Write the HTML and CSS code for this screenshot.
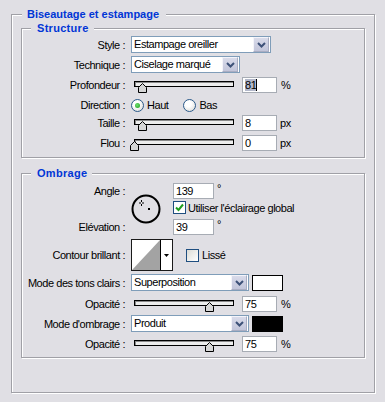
FILE: index.html
```html
<!DOCTYPE html>
<html>
<head>
<meta charset="utf-8">
<link rel="stylesheet" href="styles.css">
</head>
<body>
<fieldset class="group outer">
  <legend class="title t-outer">Biseautage et estampage</legend>

  <fieldset class="group inner structure">
    <legend class="title t-inner">Structure</legend>

    <div class="row h17">
      <span class="label">Style :</span>
      <div class="ctrl">
        <div class="select w-style">
          <span class="sel-text">Estampage oreiller</span>
          <span class="sel-btn"><svg width="9" height="6" viewBox="0 0 9 6"><polyline points="1,1 4.5,4.5 8,1" fill="none" stroke="#3d5178" stroke-width="2"/></svg></span>
        </div>
      </div>
    </div>

    <div class="row h17 mt3">
      <span class="label">Technique :</span>
      <div class="ctrl">
        <div class="select w-tech">
          <span class="sel-text">Ciselage marqué</span>
          <span class="sel-btn"><svg width="9" height="6" viewBox="0 0 9 6"><polyline points="1,1 4.5,4.5 8,1" fill="none" stroke="#3d5178" stroke-width="2"/></svg></span>
        </div>
      </div>
    </div>

    <div class="row h16 mt4">
      <span class="label">Profondeur :</span>
      <div class="ctrl">
        <div class="slider"><div class="track"></div><svg class="thumb" style="left:4px" width="9" height="10" viewBox="0 0 9 10"><polygon points="4.5,0.5 8.5,4.5 8.5,9.5 0.5,9.5 0.5,4.5" fill="#d6d6d6" stroke="#000"/></svg></div>
        <div class="field"><span class="hl">81</span></div>
        <span class="unit">%</span>
      </div>
    </div>

    <div class="row h16 mt4">
      <span class="label">Direction :</span>
      <div class="ctrl">
        <span class="radio on"></span><span class="rlabel">Haut</span>
        <span class="radio gap"></span><span class="rlabel">Bas</span>
      </div>
    </div>

    <div class="row h16 mt2">
      <span class="label">Taille :</span>
      <div class="ctrl">
        <div class="slider"><div class="track"></div><svg class="thumb" style="left:4px" width="9" height="10" viewBox="0 0 9 10"><polygon points="4.5,0.5 8.5,4.5 8.5,9.5 0.5,9.5 0.5,4.5" fill="#d6d6d6" stroke="#000"/></svg></div>
        <div class="field">8</div>
        <span class="unit px">px</span>
      </div>
    </div>

    <div class="row h16 mt4">
      <span class="label">Flou :</span>
      <div class="ctrl">
        <div class="slider"><div class="track"></div><svg class="thumb" style="left:-4px" width="9" height="10" viewBox="0 0 9 10"><polygon points="4.5,0.5 8.5,4.5 8.5,9.5 0.5,9.5 0.5,4.5" fill="#d6d6d6" stroke="#000"/></svg></div>
        <div class="field">0</div>
        <span class="unit px">px</span>
      </div>
    </div>
  </fieldset>

  <fieldset class="group inner shading">
    <legend class="title t-inner">Ombrage</legend>

    <div class="row h52">
      <div class="label stack">
        <span class="l16">Angle :</span>
        <span class="l16">Elévation :</span>
      </div>
      <div class="ctrl">
        <svg class="dial" width="30" height="30" viewBox="0 0 30 30">
          <circle cx="15" cy="15" r="13.5" fill="none" stroke="#000" stroke-width="2"/>
          <rect x="17" y="14" width="2" height="2" fill="#000"/>
          <path d="M10.5 6v2M10.5 10v2M8 9h2M11 9h2" stroke="#000" stroke-width="1"/>
        </svg>
        <div class="angle-col">
          <div class="line16"><div class="field wide">139</div><span class="deg">°</span></div>
          <div class="line13 mt2"><span class="check on"><svg width="11" height="11" viewBox="0 0 11 11"><polyline points="2,5.5 4.5,8 9,2.5" fill="none" stroke="#1f9e1f" stroke-width="2"/></svg></span><span class="clabel">Utiliser l'éclairage global</span></div>
          <div class="line16 mt5"><div class="field wide">39</div><span class="deg">°</span></div>
        </div>
      </div>
    </div>

    <div class="row h32 mt4">
      <span class="label">Contour brillant :</span>
      <div class="ctrl">
        <div class="contour">
          <div class="preview"><svg width="28" height="30" viewBox="0 0 28 30"><polygon points="0,30 28,0 28,30" fill="#a3a3a3"/></svg></div>
          <div class="cdrop"><svg width="5" height="3" viewBox="0 0 5 3"><polygon points="0,0 5,0 2.5,3" fill="#000"/></svg></div>
        </div>
        <span class="check lisse"></span><span class="clabel">Lissé</span>
      </div>
    </div>

    <div class="row h17 mt3">
      <span class="label">Mode des tons clairs :</span>
      <div class="ctrl">
        <div class="select w-mode">
          <span class="sel-text">Superposition</span>
          <span class="sel-btn"><svg width="9" height="6" viewBox="0 0 9 6"><polyline points="1,1 4.5,4.5 8,1" fill="none" stroke="#3d5178" stroke-width="2"/></svg></span>
        </div>
        <span class="swatch white"></span>
      </div>
    </div>

    <div class="row h16 mt5">
      <span class="label">Opacité :</span>
      <div class="ctrl">
        <div class="slider"><div class="track"></div><svg class="thumb" style="left:71px" width="9" height="10" viewBox="0 0 9 10"><polygon points="4.5,0.5 8.5,4.5 8.5,9.5 0.5,9.5 0.5,4.5" fill="#d6d6d6" stroke="#000"/></svg></div>
        <div class="field">75</div>
        <span class="unit">%</span>
      </div>
    </div>

    <div class="row h17 mt3">
      <span class="label">Mode d'ombrage :</span>
      <div class="ctrl">
        <div class="select w-mode">
          <span class="sel-text">Produit</span>
          <span class="sel-btn"><svg width="9" height="6" viewBox="0 0 9 6"><polyline points="1,1 4.5,4.5 8,1" fill="none" stroke="#3d5178" stroke-width="2"/></svg></span>
        </div>
        <span class="swatch black"></span>
      </div>
    </div>

    <div class="row h16 mt4">
      <span class="label">Opacité :</span>
      <div class="ctrl">
        <div class="slider"><div class="track"></div><svg class="thumb" style="left:71px" width="9" height="10" viewBox="0 0 9 10"><polygon points="4.5,0.5 8.5,4.5 8.5,9.5 0.5,9.5 0.5,4.5" fill="#d6d6d6" stroke="#000"/></svg></div>
        <div class="field">75</div>
        <span class="unit">%</span>
      </div>
    </div>
  </fieldset>
</fieldset>
</body>
</html>
```

FILE: styles.css
```css
* { box-sizing: border-box; }
html, body { margin: 0; padding: 0; }
body {
  width: 385px;
  height: 402px;
  overflow: hidden;
  padding-top: 8px;
  background: #e0dfe4;
  font-family: "Liberation Sans", Arial, sans-serif;
  font-size: 11px;
  letter-spacing: -0.45px;
  color: #000;
}

/* group boxes */
.group {
  margin: 0;
  min-width: 0;
  border: 1px solid #a0a0a6;
  box-shadow: inset 1px 1px 0 #fff, 1px 1px 0 #fff;
}
.outer { margin-left: 11px; width: 364px; padding: 1px 0 34px 0; }
.inner { margin: 0 9px; }
.structure { padding: 1px 0 6px 0; }
.shading { margin-top: 9px; padding: 3px 0 5px 0; }

.title {
  font-weight: bold;
  color: #0036d6;
  letter-spacing: 0;
  line-height: 13px;
  height: 13px;
  background: #e0dfe4;
}
.t-outer { margin-left: 10px; padding: 0 7px 0 5px; }
.t-inner { margin-left: 9px; padding: 0 5px 0 6px; letter-spacing: 0.3px; }

/* rows */
.row {
  display: grid;
  grid-template-columns: 103px auto;
  column-gap: 6px;
  align-items: center;
}
.h16 { height: 16px; }
.h17 { height: 17px; }
.h32 { height: 32px; }
.h52 { height: 52px; }
.mt2 { margin-top: 2px; }
.mt3 { margin-top: 3px; }
.mt4 { margin-top: 4px; }
.mt5 { margin-top: 5px; }

.label { text-align: right; white-space: nowrap; line-height: 14px; }
.label.stack {
  align-self: stretch;
  display: flex;
  flex-direction: column;
  justify-content: space-between;
}
.l16 { line-height: 16px; }
.ctrl { display: flex; align-items: center; height: 100%; white-space: nowrap; }

/* select */
.select {
  display: flex;
  height: 17px;
  border: 1px solid #7f9db9;
  background: #fff;
}
.w-style { width: 140px; }
.w-tech { width: 109px; }
.w-mode { width: 118px; }
.sel-text { flex: 1; padding-left: 2px; line-height: 15px; }
.sel-btn {
  width: 16px;
  margin-right: 1px;
  display: flex;
  align-items: center;
  justify-content: center;
  border: 1px solid;
  border-color: #f4f4fa #a9adc2 #a9adc2 #f4f4fa;
  background: linear-gradient(#d9dbea, #c2c5da);
}

/* slider */
.slider { position: relative; width: 100px; height: 16px; margin-left: 3px; }
.track {
  margin-top: 4px;
  height: 6px;
  border: 1px solid #000;
  background: #ededed;
  box-shadow: inset 1px 1px 0 #8a8a8a;
}
.thumb { position: absolute; top: 6px; }

/* input fields */
.field {
  width: 35px;
  height: 16px;
  margin-left: 8px;
  border: 1px solid #a7acb4;
  background: #fff;
  padding-left: 2px;
  line-height: 14px;
}
.field.wide { width: 41px; margin-left: 0; }
.hl { background: #b3b8ca; border-right: 1px solid #000; padding-right: 0; }
.unit { margin-left: 4px; }
.unit.px { margin-left: 3px; }
.deg { margin-left: 3px; align-self: flex-start; line-height: 10px; }

/* radio */
.radio {
  width: 13px;
  height: 13px;
  border-radius: 50%;
  border: 1px solid #2b5a8a;
  background: radial-gradient(circle at 40% 35%, #ffffff 30%, #d6d6d2);
  display: inline-flex;
  align-items: center;
  justify-content: center;
}
.radio.on::after {
  content: "";
  width: 5px;
  height: 5px;
  border-radius: 50%;
  background: radial-gradient(circle at 40% 40%, #6fe06f, #1c9a1c);
}
.radio.gap { margin-left: 15px; }
.rlabel { margin-left: 3px; }

/* angle */
.dial { display: block; }
.angle-col { margin-left: 12px; display: flex; flex-direction: column; align-self: stretch; }
.line16 { height: 16px; display: flex; align-items: center; }
.line13 { height: 13px; display: flex; align-items: center; }

/* checkbox */
.check {
  width: 13px;
  height: 13px;
  border: 1px solid #1f4e80;
  background: linear-gradient(135deg, #dcdcd6, #ffffff);
  display: inline-flex;
  align-items: center;
  justify-content: center;
}
.check.on { background: #fff; }
.clabel { margin-left: 2px; }
.check.lisse { margin-left: 13px; }
.lisse + .clabel { margin-left: 3px; }

/* contour */
.contour {
  width: 42px;
  height: 32px;
  border: 1px solid #1a1a1a;
  background: #fff;
  display: flex;
}
.preview { width: 29px; border-right: 1px solid #000; }
.preview svg { display: block; }
.cdrop { flex: 1; display: flex; align-items: center; justify-content: center; }
.cdrop svg { display: block; }

/* swatches */
.swatch { width: 31px; height: 16px; margin-left: 3px; border: 1px solid #000; }
.swatch.white { background: #fff; }
.swatch.black { background: #000; }
```
